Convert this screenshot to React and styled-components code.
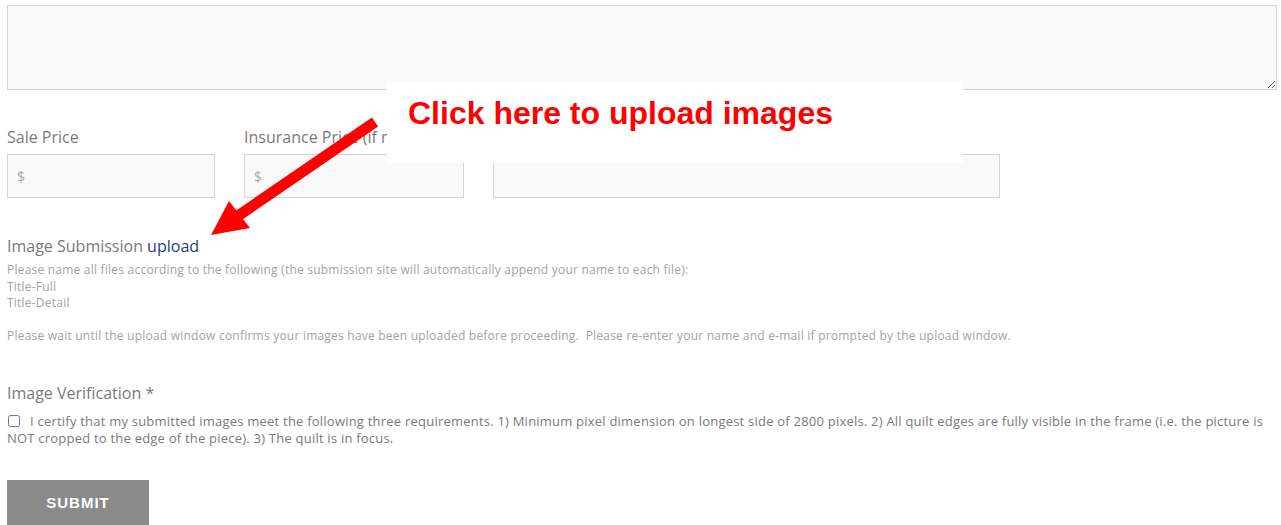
import React from 'react';
import styled, { createGlobalStyle } from 'styled-components';

const GlobalStyle = createGlobalStyle`
  body {
    margin: 0;
    background: #fff;
    font-family: "Open Sans", "Liberation Sans", Arial, sans-serif;
  }
`;

const Page = styled.div`
  position: relative;
  padding: 5px 4px 0 7px;
  height: 520px;
  overflow: hidden;
`;

const TextArea = styled.textarea`
  display: block;
  box-sizing: border-box;
  width: 100%;
  height: 85px;
  margin: 0;
  background: #f9f9f9;
  border: 1px solid #d4d4d4;
  resize: vertical;
`;

const PriceRow = styled.div`
  display: flex;
  gap: 29px;
  margin-top: 37px;
`;

const Field = styled.div`
  display: flex;
  flex-direction: column;
  width: ${(p) => p.width}px;
`;

const Label = styled.label`
  display: block;
  height: 20px;
  font-size: 16px;
  line-height: 20px;
  color: #7a7a7a;
  white-space: nowrap;
  margin-bottom: 7px;
`;

const Input = styled.input`
  box-sizing: border-box;
  width: 100%;
  height: 44px;
  padding: 0 9px;
  background: #f9f9f9;
  border: 1px solid #d4d4d4;
  font-family: inherit;
  font-size: 14px;
  color: #999;
  &::placeholder {
    color: #a9a9a9;
  }
`;

const Section = styled.div`
  margin-top: ${(p) => p.top}px;
`;

const Heading = styled.div`
  font-size: 16px;
  line-height: 20px;
  color: #7a7a7a;
`;

const UploadLink = styled.a`
  color: #1f3a8a;
  text-decoration: none;
`;

const Note = styled.div`
  margin-top: 6px;
  font-size: 12px;
  line-height: 16.5px;
  letter-spacing: 0.22px;
  color: #a3a3a3;
`;

const CheckRow = styled.label`
  display: block;
  margin-top: 10px;
  font-size: 13px;
  line-height: 17px;
  letter-spacing: 0.22px;
  color: #7a7a7a;
`;

const Check = styled.input`
  width: 12px;
  height: 12px;
  margin: 0 10px 0 1px;
  vertical-align: -1px;
`;

const SubmitButton = styled.button`
  display: block;
  margin-top: 33px;
  width: 142px;
  height: 46px;
  border: 0;
  background: #8a8a8a;
  color: #fff;
  font-family: "Liberation Sans", Arial, sans-serif;
  font-weight: bold;
  font-size: 15px;
  letter-spacing: 1px;
`;

/* red call-out laid over the price row, pointing at the upload link */
const Callout = styled.div`
  position: absolute;
  left: 387px;
  top: 81px;
  width: 576px;
  height: 82px;
  box-sizing: border-box;
  padding: 13px 0 0 21px;
  background: #fff;
  color: #ff0000;
  font-family: "Liberation Sans", Arial, sans-serif;
  font-weight: bold;
  font-size: 32px;
  line-height: 38px;
`;

const Arrow = styled.svg`
  position: absolute;
  left: 0;
  top: 0;
  pointer-events: none;
`;

export default function App() {
  return (
    <>
      <GlobalStyle />
      <Page>
        <TextArea />

        <PriceRow>
          <Field width={208}>
            <Label>Sale Price</Label>
            <Input placeholder="$" />
          </Field>
          <Field width={220}>
            <Label>Insurance Price (if not for sale)</Label>
            <Input placeholder="$" />
          </Field>
          <Field width={507}>
            <Label />
            <Input />
          </Field>
        </PriceRow>

        <Section top={38}>
          <Heading>
            Image Submission <UploadLink href="#">upload</UploadLink>
          </Heading>
          <Note>
            Please name all files according to the following (the submission site will automatically append your name to each file):
            <br />
            Title-Full
            <br />
            Title-Detail
            <br />
            <br />
            Please wait until the upload window confirms your images have been uploaded before proceeding.&nbsp; Please re-enter your name and e-mail if prompted by the upload window.
          </Note>
        </Section>

        <Section top={38}>
          <Heading>Image Verification *</Heading>
          <CheckRow>
            <Check type="checkbox" />
            I certify that my submitted images meet the following three requirements. 1) Minimum pixel dimension on longest side of 2800 pixels. 2) All quilt edges are fully visible in the frame (i.e. the picture is NOT cropped to the edge of the piece). 3) The quilt is in focus.
          </CheckRow>
        </Section>

        <SubmitButton>SUBMIT</SubmitButton>

        <Callout>Click here to upload images</Callout>
        <Arrow width="400" height="260" viewBox="0 0 400 260">
          <line x1="375" y1="122" x2="232" y2="220" stroke="#ff0000" strokeWidth="11" />
          <polygon points="211,235 229,201 250,228" fill="#ff0000" />
        </Arrow>
      </Page>
    </>
  );
}
